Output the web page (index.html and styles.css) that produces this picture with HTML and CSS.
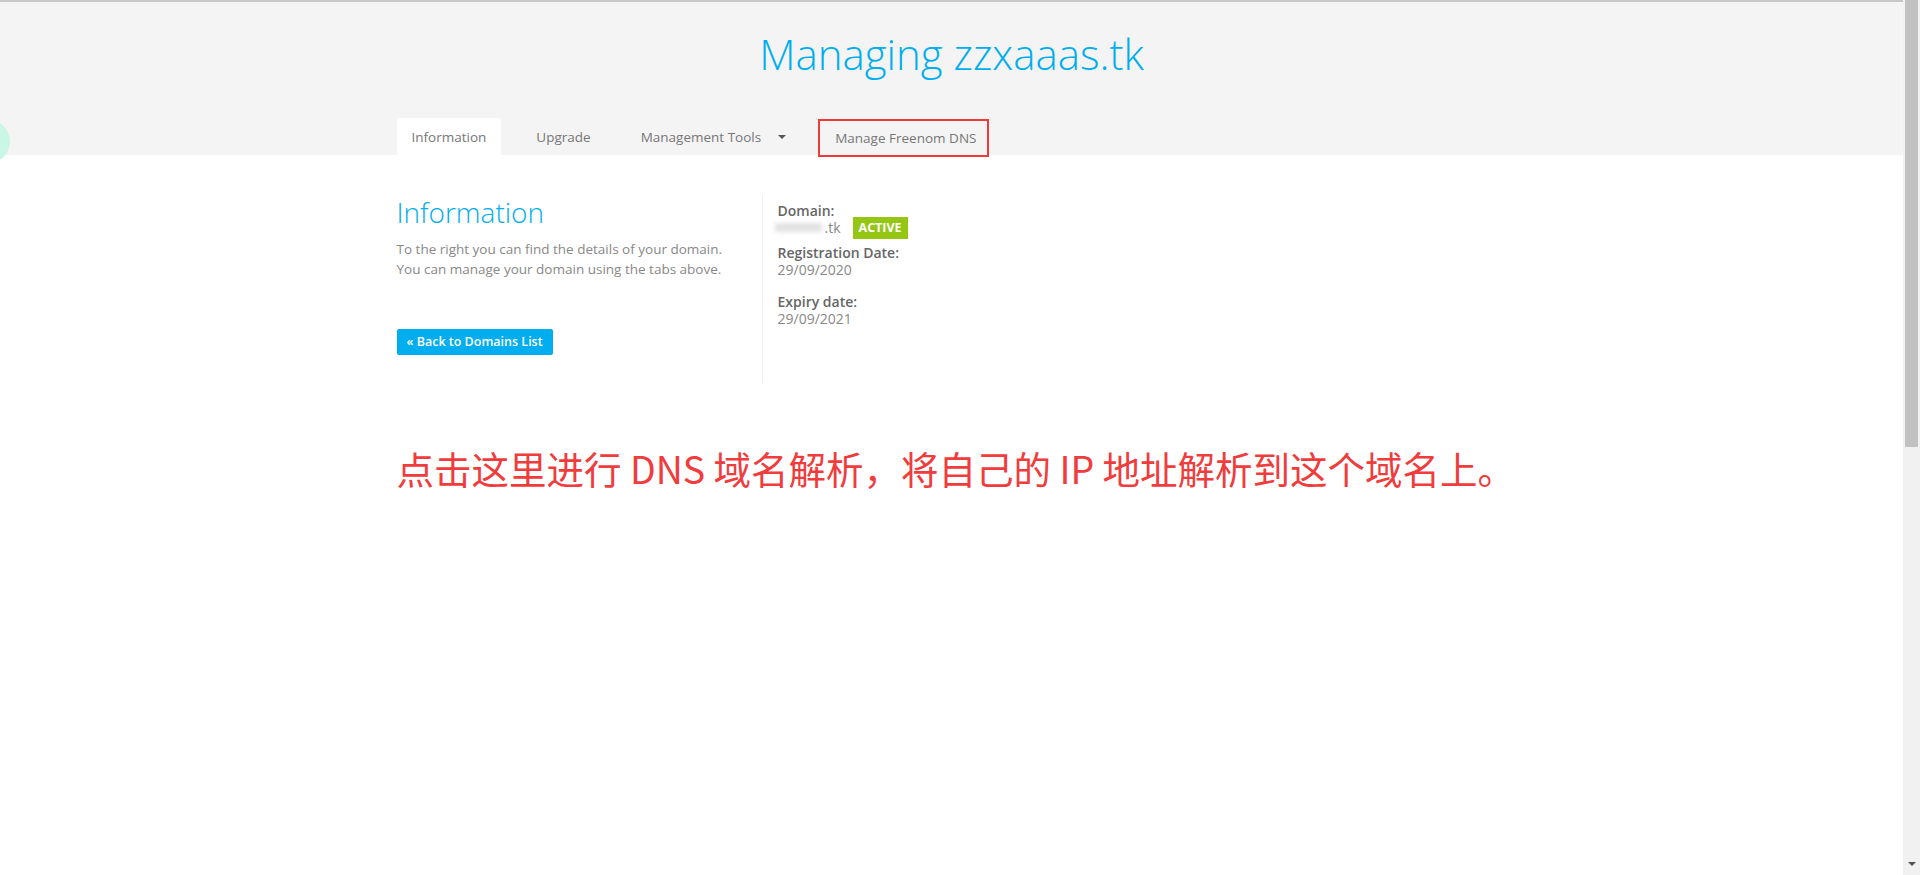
FILE: index.html
```html
<!DOCTYPE html>
<html lang="en">
<head>
    <meta charset="UTF-8">
    <meta name="viewport" content="width=device-width, initial-scale=1.0">
    <title>Managing zzxaaas.tk</title>
    <link rel="stylesheet" href="styles.css">
</head>
<body>
    <div class="page">
        <div class="bubble"></div>

        <header class="header">
            <h1 class="title">Managing zzxaaas.tk</h1>
            <div class="container">
                <ul class="tabs">
                    <li class="tab active">Information</li>
                    <li class="tab">Upgrade</li>
                    <li class="tab">Management Tools <span class="caret"></span></li>
                    <li class="tab marked">Manage Freenom DNS</li>
                </ul>
            </div>
        </header>

        <main class="container">
            <div class="row">
                <section class="col-info">
                    <h2>Information</h2>
                    <p>To the right you can find the details of your domain.<br>
                    You can manage your domain using the tabs above.</p>
                    <a class="btn" href="#">&laquo; Back to Domains List</a>
                </section>

                <section class="col-details">
                    <div class="label">Domain:</div>
                    <div class="domain-row">
                        <span class="masked"></span><span class="value">.tk</span>
                        <span class="badge">ACTIVE</span>
                    </div>

                    <div class="group">
                        <div class="label">Registration Date:</div>
                        <div class="value">29/09/2020</div>
                    </div>

                    <div class="group spaced">
                        <div class="label">Expiry date:</div>
                        <div class="value">29/09/2021</div>
                    </div>
                </section>
            </div>

            <p class="note">点击这里进行 DNS 域名解析，将自己的 IP 地址解析到这个域名上。</p>
        </main>
    </div>

    <div class="scrollbar">
        <div class="thumb"></div>
        <div class="arrow"></div>
    </div>
</body>
</html>
```

FILE: styles.css
```css
* {
    margin: 0;
    padding: 0;
    box-sizing: border-box;
}

body {
    display: flex;
    height: 875px;
    overflow: hidden;
    background: #ffffff;
    font-family: 'Open Sans', 'Liberation Sans', sans-serif;
    font-size: 13.5px;
    color: #888888;
}

.page {
    position: relative;
    flex: 1;
    overflow: hidden;
}

/* floating chat bubble peeking from the left edge */
.bubble {
    position: absolute;
    left: -33px;
    top: 120px;
    width: 43px;
    height: 43px;
    border-radius: 50%;
    background: #c9f6e5;
}

.container {
    width: 1110px;
    margin: 0 auto;
}

.header {
    height: 155px;
    background: #f4f4f4;
    border-top: 2px solid #c8c8c8;
}

.title {
    padding-top: 23px;
    font-size: 42px;
    font-weight: 300;
    line-height: 57px;
    color: #00aeef;
    text-align: center;
}

.tabs {
    display: flex;
    align-items: flex-start;
    gap: 20px;
    height: 37px;
    margin-top: 36px;
    list-style: none;
}

.tab {
    display: flex;
    align-items: center;
    height: 37px;
    padding: 0 15px;
    color: #777777;
    border-radius: 3px 3px 0 0;
    cursor: pointer;
}

.tab.active {
    background: #ffffff;
}

.tab.marked {
    height: 38px;
    margin-top: 1px;
    margin-left: -3px;
    padding: 0 11px 0 15px;
    border: 2px solid #f03a3a;
    border-radius: 0;
}

.caret {
    width: 0;
    height: 0;
    margin-left: 17px;
    border-left: 4px solid transparent;
    border-right: 4px solid transparent;
    border-top: 4px solid #555555;
}

.row {
    display: flex;
    margin-top: 40px;
}

.col-info {
    width: 365px;
}

.col-info h2 {
    font-size: 28px;
    font-weight: 300;
    line-height: 34px;
    color: #00aeef;
}

.col-info p {
    margin-top: 10px;
    line-height: 20px;
}

.btn {
    display: inline-block;
    height: 26px;
    margin-top: 50px;
    padding: 0 10px;
    font-size: 12.5px;
    font-weight: 600;
    line-height: 26px;
    color: #ffffff;
    background: #00aeef;
    border-radius: 2px;
    text-decoration: none;
}

.col-details {
    min-height: 188px;
    padding: 7px 0 0 15px;
    border-left: 1px solid #eeeeee;
    font-size: 14px;
}

.label {
    font-weight: 600;
    line-height: 17px;
    color: #666666;
}

.value {
    line-height: 17px;
    color: #888888;
}

.domain-row {
    display: flex;
    align-items: center;
    height: 17px;
}

.masked {
    width: 47px;
    height: 9px;
    margin-left: -3px;
    margin-right: 3px;
    background: #e2e2e2;
    filter: blur(2px);
}

.badge {
    height: 22px;
    margin-left: 12px;
    padding: 0 6px;
    font-size: 12.5px;
    font-weight: 700;
    line-height: 22px;
    color: #ffffff;
    background: #95c613;
}

.group {
    margin-top: 8px;
}

.group.spaced {
    margin-top: 15px;
}

.note {
    margin-top: 58px;
    font-family: 'Noto Sans CJK SC', 'Noto Sans', sans-serif;
    font-size: 37.5px;
    line-height: 54px;
    color: #f03c3c;
    text-align: center;
    white-space: nowrap;
}

.scrollbar {
    display: flex;
    flex-direction: column;
    align-items: center;
    width: 17px;
    background: #f1f1f1;
}

.thumb {
    width: 13px;
    height: 447px;
    background: #c1c1c1;
}

.arrow {
    width: 0;
    height: 0;
    margin-top: auto;
    margin-bottom: 9px;
    border-left: 4px solid transparent;
    border-right: 4px solid transparent;
    border-top: 4px solid #505050;
}
```
